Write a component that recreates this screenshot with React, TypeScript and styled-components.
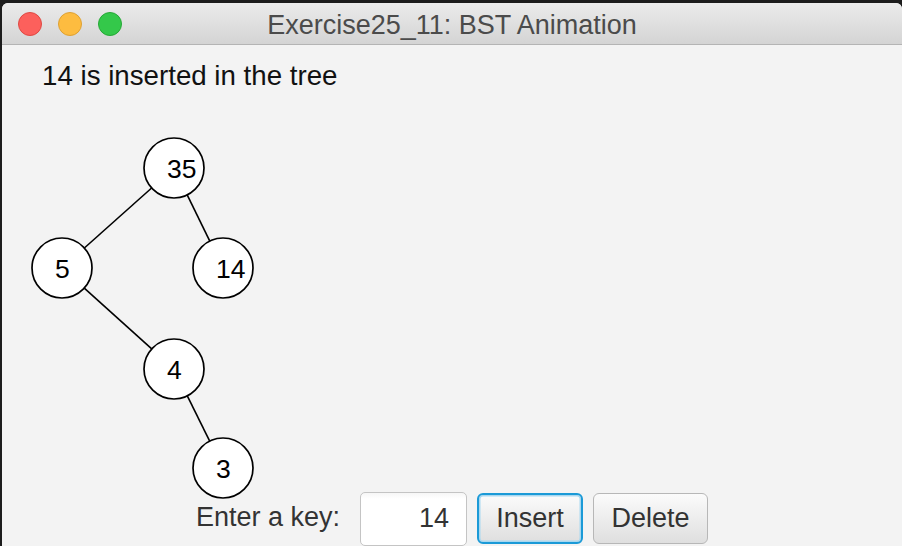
import React from "react";
import styled, { createGlobalStyle } from "styled-components";

const GlobalStyle = createGlobalStyle`
    html, body {
        margin: 0;
        padding: 0;
        background: #1c1c1c;
        overflow: hidden;
    }

    body {
        font-family: "Liberation Sans", Arial, Helvetica, sans-serif;
    }
`;

const Window = styled.div`
    margin: 3px 0 0 2px;
    width: 900px;
    height: 543px;
    display: flex;
    flex-direction: column;
    background: #f3f3f3;
    border-radius: 6px 6px 0 0;
    overflow: hidden;
`;

const TitleBar = styled.div`
    position: relative;
    height: 41px;
    flex: none;
    display: flex;
    align-items: center;
    justify-content: center;
    background: linear-gradient(#ebebeb, #d4d4d4);
    border-bottom: 1px solid #b4b4b4;
`;

const Lights = styled.div`
    position: absolute;
    left: 16px;
    top: 9px;
    display: flex;
    gap: 16px;
`;

const Light = styled.span<{ $fill: string; $edge: string }>`
    width: 24px;
    height: 24px;
    box-sizing: border-box;
    border-radius: 50%;
    background: ${(p) => p.$fill};
    border: 1px solid ${(p) => p.$edge};
`;

const Title = styled.div`
    font-size: 27px;
    line-height: 30px;
    color: #4b4b4b;
    padding-top: 2px;
`;

const Content = styled.div`
    flex: 1;
    display: flex;
    flex-direction: column;
`;

const Message = styled.div`
    padding: 15px 0 0 40px;
    font-size: 27.7px;
    line-height: 32px;
    color: #111;
`;

const TreeCanvas = styled.svg`
    display: block;
    width: 900px;
    height: 400px;
    overflow: visible;
    flex: none;
`;

const NodeLabel = styled.text`
    font-family: "Liberation Sans", Arial, sans-serif;
    font-size: 26.5px;
    fill: #000;
`;

const Controls = styled.div`
    height: 54px;
    display: flex;
    align-items: flex-start;
    justify-content: center;
    gap: 10px;
    font-size: 27px;
    color: #333;
`;

const KeyLabel = styled.span`
    margin-top: 9px;
    margin-right: 10px;
    line-height: 32px;
`;

const KeyField = styled.div`
    width: 107px;
    height: 54px;
    box-sizing: border-box;
    border: 1.5px solid #c4c4c4;
    border-radius: 5px;
    background: linear-gradient(#f6f6f6, #fff 6px);
    padding: 9px 17px 0 0;
    text-align: right;
    line-height: 32px;
`;

const Button = styled.div<{ $focused?: boolean; $width: number }>`
    width: ${(p) => p.$width}px;
    height: 51px;
    margin-top: 1px;
    box-sizing: border-box;
    border-radius: 6px;
    background: linear-gradient(#fbfbfb, #dfdfdf);
    display: flex;
    align-items: center;
    justify-content: center;
    line-height: 32px;
    padding-bottom: 2px;
    border: ${(p) => (p.$focused ? "2px solid #1b9ad7" : "1.5px solid #b7b7b7")};
    box-shadow: ${(p) => (p.$focused ? "inset 0 0 0 1.5px #a9d8f0" : "none")};
`;

type TreeNode = { key: number; x: number; y: number; parent?: number };

// positions in canvas coords (page x - 2, page y - 92)
const nodes: TreeNode[] = [
    { key: 35, x: 172, y: 76 },
    { key: 5, x: 60, y: 176, parent: 35 },
    { key: 14, x: 221, y: 176, parent: 35 },
    { key: 4, x: 172, y: 277, parent: 5 },
    { key: 3, x: 221, y: 376, parent: 4 },
];

const RADIUS = 30;

function edgePoints(a: TreeNode, b: TreeNode) {
    const dx = b.x - a.x;
    const dy = b.y - a.y;
    const len = Math.hypot(dx, dy);
    const ux = dx / len;
    const uy = dy / len;
    return {
        x1: a.x + ux * RADIUS,
        y1: a.y + uy * RADIUS,
        x2: b.x - ux * RADIUS,
        y2: b.y - uy * RADIUS,
    };
}

export default function App() {
    const byKey = new Map(nodes.map((n) => [n.key, n]));

    return (
        <>
            <GlobalStyle />
            <Window>
                <TitleBar>
                    <Lights>
                        <Light $fill="#fc605c" $edge="#df4943" />
                        <Light $fill="#fdbc40" $edge="#dea133" />
                        <Light $fill="#34c84a" $edge="#26a836" />
                    </Lights>
                    <Title>Exercise25_11: BST Animation</Title>
                </TitleBar>
                <Content>
                    <Message>14 is inserted in the tree</Message>
                    <TreeCanvas>
                        {nodes
                            .filter((n) => n.parent !== undefined)
                            .map((n) => {
                                const p = byKey.get(n.parent as number)!;
                                const e = edgePoints(p, n);
                                return (
                                    <line key={`l${n.key}`} {...e} stroke="#000" strokeWidth={1.6} />
                                );
                            })}
                        {nodes.map((n) => (
                            <g key={n.key}>
                                <circle cx={n.x} cy={n.y} r={RADIUS} fill="#fff" stroke="#000" strokeWidth={1.7} />
                                <NodeLabel x={n.x - 7} y={n.y + 9.5}>{n.key}</NodeLabel>
                            </g>
                        ))}
                    </TreeCanvas>
                    <Controls>
                        <KeyLabel>Enter a key:</KeyLabel>
                        <KeyField>14</KeyField>
                        <Button $focused $width={106}>Insert</Button>
                        <Button $width={115}>Delete</Button>
                    </Controls>
                </Content>
            </Window>
        </>
    );
}
